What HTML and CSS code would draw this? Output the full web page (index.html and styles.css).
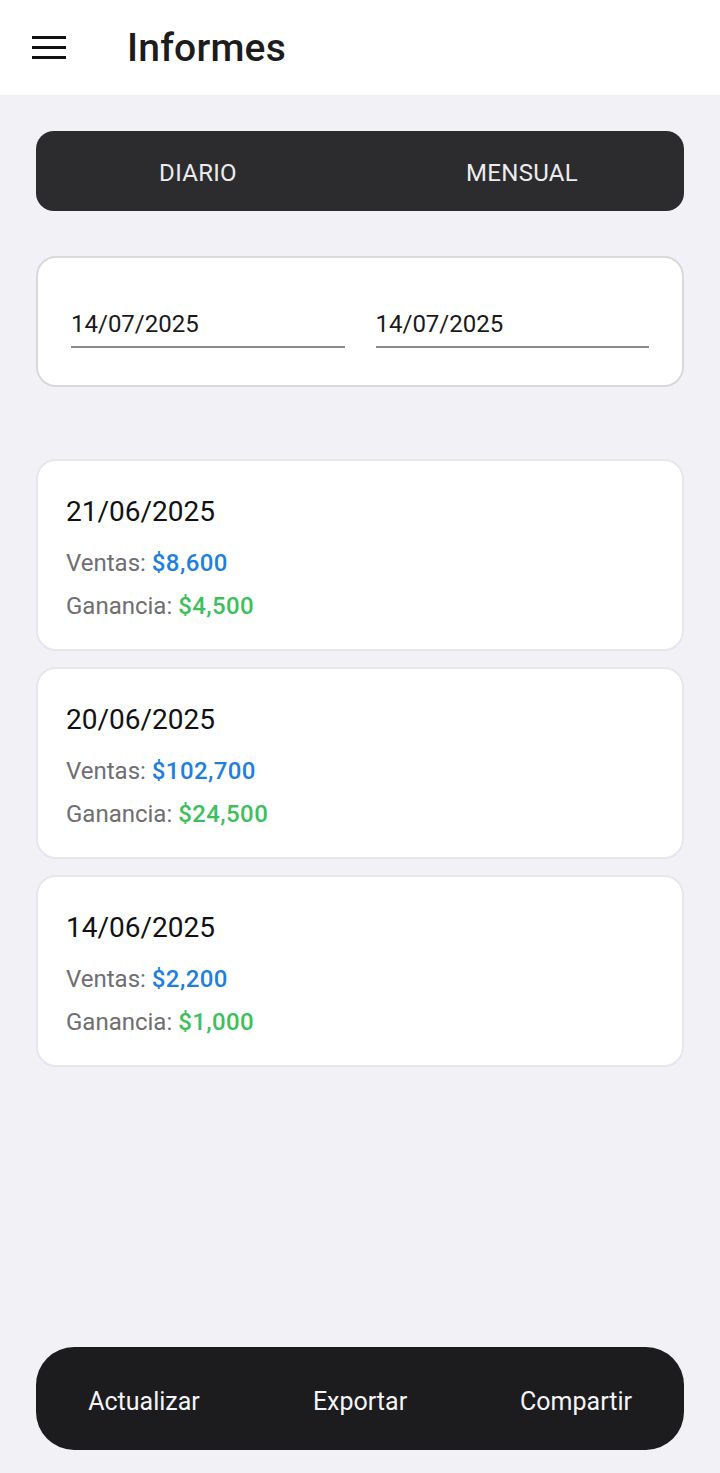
FILE: index.html
```html
<!DOCTYPE html>
<html lang="es">
<head>
<meta charset="utf-8">
<title>Informes</title>
<link rel="stylesheet" href="styles.css">
</head>
<body>
<div class="app">
  <header class="topbar">
    <svg class="menu-icon" width="34" height="24" viewBox="0 0 34 24" aria-hidden="true">
      <rect x="0" y="1" width="34" height="3" fill="#111"/>
      <rect x="0" y="11" width="34" height="3" fill="#111"/>
      <rect x="0" y="21" width="34" height="3" fill="#111"/>
    </svg>
    <h1 class="title">Informes</h1>
  </header>

  <main class="content">
    <div class="tabs">
      <div class="tab">DIARIO</div>
      <div class="tab">MENSUAL</div>
    </div>

    <div class="range-card">
      <div class="date-field">14/07/2025</div>
      <div class="date-field">14/07/2025</div>
    </div>

    <div class="reports">
      <div class="report-card">
        <div class="report-date">21/06/2025</div>
        <div class="report-line">Ventas: <span class="sales">$8,600</span></div>
        <div class="report-line">Ganancia: <span class="profit">$4,500</span></div>
      </div>
      <div class="report-card">
        <div class="report-date">20/06/2025</div>
        <div class="report-line">Ventas: <span class="sales">$102,700</span></div>
        <div class="report-line">Ganancia: <span class="profit">$24,500</span></div>
      </div>
      <div class="report-card">
        <div class="report-date">14/06/2025</div>
        <div class="report-line">Ventas: <span class="sales">$2,200</span></div>
        <div class="report-line">Ganancia: <span class="profit">$1,000</span></div>
      </div>
    </div>
  </main>

  <footer class="actions">
    <div class="action">Actualizar</div>
    <div class="action">Exportar</div>
    <div class="action">Compartir</div>
  </footer>
</div>
</body>
</html>
```

FILE: styles.css
```css
* { box-sizing: border-box; }

html, body {
  margin: 0;
  padding: 0;
}

body {
  background: #f1f1f6;
  font-family: Roboto, "Noto Sans", sans-serif;
  color: #111;
}

.app {
  width: 720px;
  height: 1473px;
  display: flex;
  flex-direction: column;
}

.topbar {
  height: 95px;
  background: #ffffff;
  display: flex;
  align-items: center;
  padding-left: 32px;
  flex-shrink: 0;
}

.menu-icon {
  display: block;
  margin-top: -2px;
}

.title {
  margin: 0 0 0 61px;
  font-size: 39px;
  font-weight: 500;
  color: #1c1c1c;
  letter-spacing: 0.2px;
}

.content {
  flex: 1;
  padding: 36px 36px 0 36px;
  display: flex;
  flex-direction: column;
}

.tabs {
  height: 80px;
  background: #2c2c2e;
  border-radius: 18px;
  display: flex;
  align-items: center;
}

.tab {
  flex: 1;
  text-align: center;
  color: #ececf0;
  font-size: 24px;
  letter-spacing: 0.3px;
  padding-top: 4px;
}

.range-card {
  margin-top: 45px;
  height: 131px;
  background: #ffffff;
  border: 2px solid #d8d8dd;
  border-radius: 20px;
  display: flex;
  gap: 31px;
  padding: 50px 33px 0 33px;
}

.date-field {
  flex: 1;
  height: 40px;
  border-bottom: 2px solid #8a8a8a;
  font-size: 24px;
  color: #1a1a1a;
  padding-top: 2px;
}

.reports {
  margin-top: 72px;
  display: flex;
  flex-direction: column;
  gap: 16px;
}

.report-card {
  height: 192px;
  background: #ffffff;
  border: 2px solid #e6e6eb;
  border-radius: 20px;
  padding: 32px 28px 0 28px;
}

.report-date {
  font-size: 28px;
  color: #111;
  line-height: 38px;
}

.report-line {
  font-size: 24px;
  color: #6e6e73;
  line-height: 28px;
  margin-top: 18px;
}

.report-line + .report-line {
  margin-top: 15px;
}

.sales {
  color: #1e7fe0;
  font-weight: 500;
  letter-spacing: 0.4px;
}

.profit {
  color: #3dbf5e;
  font-weight: 500;
  letter-spacing: 0.4px;
}

.actions {
  margin: 0 36px 23px 36px;
  height: 103px;
  background: #1c1c1e;
  border-radius: 38px;
  display: flex;
  align-items: center;
  flex-shrink: 0;
}

.action {
  flex: 1;
  text-align: center;
  color: #f4f4f6;
  font-size: 25px;
  padding-top: 5px;
}
```
